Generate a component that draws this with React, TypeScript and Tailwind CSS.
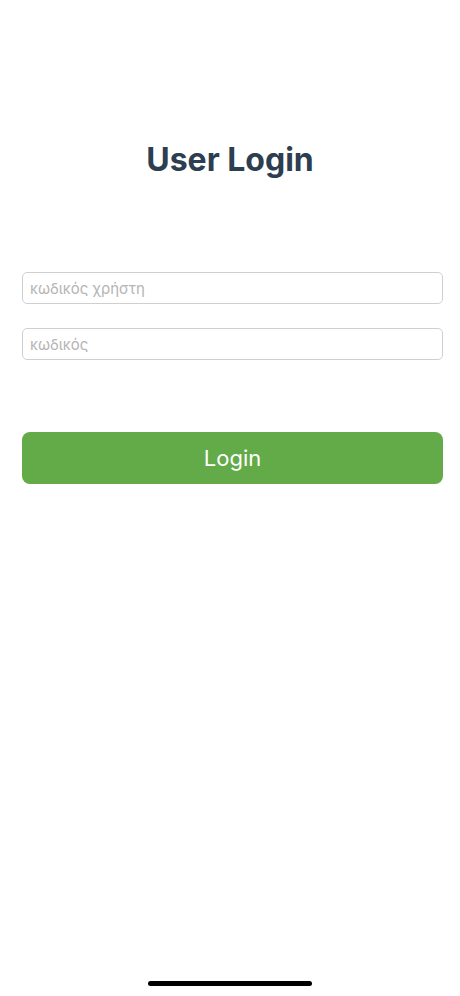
export default function App() {
  return (
    <div
      className="flex h-[996px] w-full flex-col bg-white"
      style={{ fontFamily: 'Inter, "Noto Sans", sans-serif' }}
    >
      <h1 className="mt-[142px] text-center text-[32px] font-bold leading-[36px] text-[#2c3e50]">
        User Login
      </h1>

      <div className="flex flex-col pl-[22px] pr-[17px]">
        <div className="mt-[94px] flex flex-col gap-[24px]">
          <input
            type="text"
            placeholder="κωδικός χρήστη"
            className="h-[32px] w-full rounded-[5px] border border-[#cfcfcf] px-[7px] text-[15px] text-[#333] placeholder:text-[#b5b5b5] outline-none"
          />
          <input
            type="password"
            placeholder="κωδικός"
            className="h-[32px] w-full rounded-[5px] border border-[#cfcfcf] px-[7px] text-[15px] text-[#333] placeholder:text-[#b5b5b5] outline-none"
          />
        </div>

        <button className="mt-[72px] h-[52px] w-full rounded-[8px] bg-[#63aa48] text-[22px] font-normal text-white">
          Login
        </button>
      </div>

      <div className="mt-auto mb-[10px] flex justify-center">
        <div className="h-[5px] w-[164px] rounded-full bg-black" />
      </div>
    </div>
  );
}
